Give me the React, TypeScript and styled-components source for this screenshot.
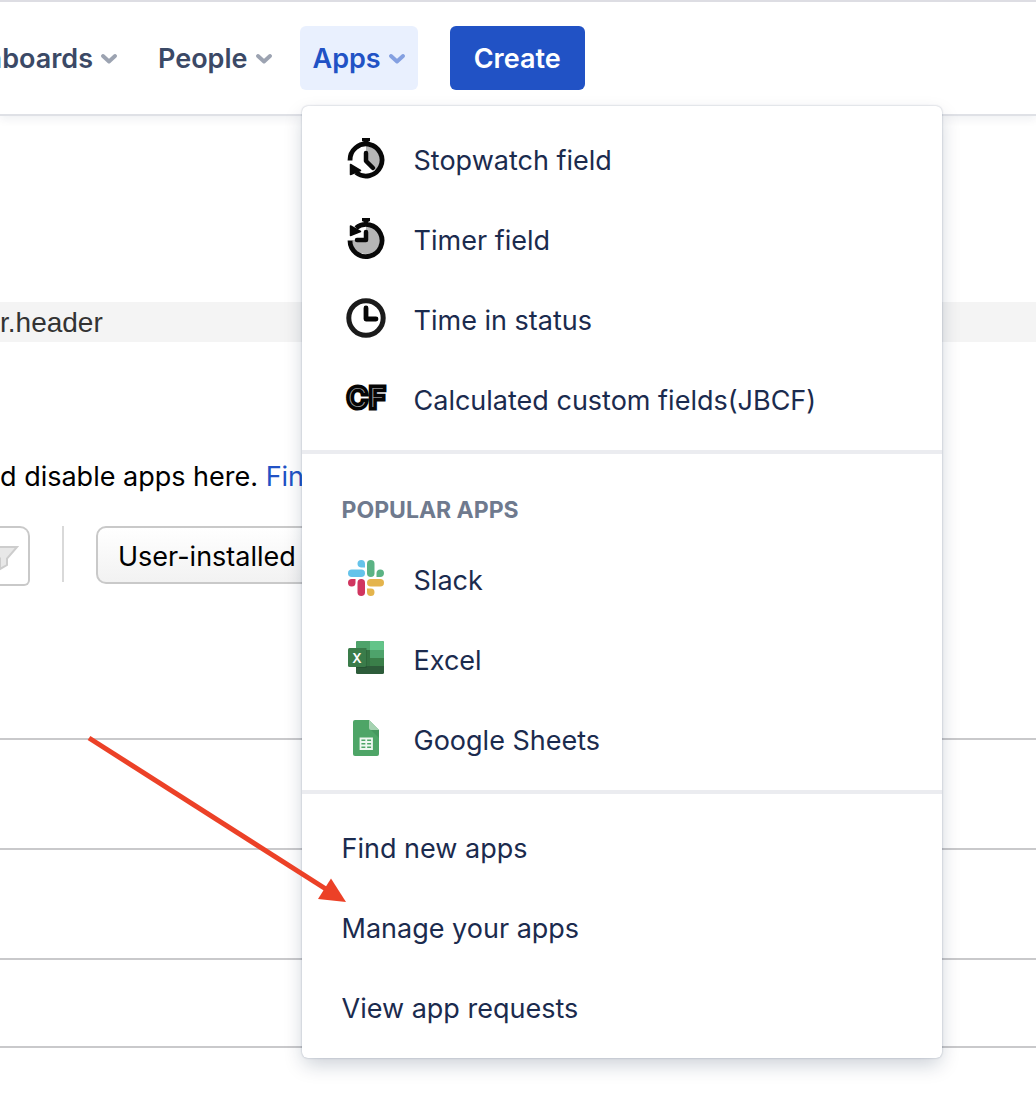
import React from "react";
import styled, { createGlobalStyle } from "styled-components";

const sans = `Inter, "Liberation Sans", Arial, sans-serif`;

const GlobalStyle = createGlobalStyle`
  *, *::before, *::after { box-sizing: border-box; }
  body {
    margin: 0;
    background: #fff;
    color: #000;
    font-family: ${sans};
    font-size: 27px;
    line-height: 36px;
    overflow-x: hidden;
  }
  button, input, select { font: inherit; margin: 0; }
`;

const Page = styled.div`
  position: relative;
  min-height: 100vh;
  overflow: hidden;
`;

const Header = styled.header`
  display: flex;
  align-items: center;
  gap: 32px;
  padding: 24px 0;
  border-top: 2px solid #dddde3;
  border-bottom: 2px solid #dfe1e6;
  box-shadow: 0 4px 8px rgba(9, 30, 66, 0.06);
`;

const Nav = styled.nav`
  display: flex;
  gap: 15px;
`;

const MenuAnchor = styled.div`
  position: relative;
`;

const NavButton = styled.button<{ $active?: boolean; $clipped?: boolean }>`
  display: flex;
  align-items: center;
  justify-content: flex-end;
  gap: 8px;
  width: ${(p) => (p.$clipped ? "130px" : "auto")};
  height: 64px;
  padding: 2px 13px 0;
  padding-left: ${(p) => (p.$clipped ? "0" : "13px")};
  overflow: hidden;
  border: 0;
  border-radius: 6px;
  background: ${(p) => (p.$active ? "#e9f0fe" : "transparent")};
  color: ${(p) => (p.$active ? "#2152c5" : "#3b4966")};
  font-weight: 600;
  cursor: pointer;

  svg {
    flex: none;
    opacity: 0.5;
  }
`;

const CreateButton = styled.button`
  height: 64px;
  padding: 2px 24px 0;
  border: 0;
  border-radius: 6px;
  background: #2152c5;
  color: #fff;
  font-weight: 600;
  cursor: pointer;
`;

const Menu = styled.div`
  position: absolute;
  z-index: 2;
  top: calc(100% + 16px);
  left: 2px;
  width: 640px;
  border-radius: 6px;
  background: #fff;
  box-shadow: 0 8px 20px -2px rgba(9, 30, 66, 0.22), 0 0 2px rgba(9, 30, 66, 0.31);
`;

const Section = styled.section`
  padding: 14px 0 10px;

  & + & {
    border-top: 4px solid #ebecf0;
  }
`;

const SectionTitle = styled.h2`
  margin: 0;
  padding: 28px 40px 16px;
  color: #6f7a8e;
  font-size: 23px;
  line-height: 28px;
  font-weight: 700;
`;

const MenuItem = styled.a`
  display: flex;
  align-items: center;
  gap: 24px;
  height: 80px;
  padding: 2px 40px 0;
  color: #1b2b4e;
  text-decoration: none;

  svg {
    flex: none;
    margin-bottom: 6px;
  }
`;

const Main = styled.main`
  padding-top: 186px;
`;

const Banner = styled.div`
  height: 40px;
  background: #f4f4f4;
  color: #333;
  font-family: "Liberation Sans", Arial, sans-serif;
  font-size: 28px;
  line-height: 42px;
`;

const Intro = styled.p`
  margin: 117px 0 31px;
  white-space: nowrap;

  a {
    color: #2152c5;
    text-decoration: none;
  }
`;

const Toolbar = styled.div`
  display: flex;
  align-items: flex-start;
`;

const FilterBox = styled.label`
  display: flex;
  align-items: center;
  width: 30px;
  height: 60px;
  padding-top: 4px;
  border: 2px solid #c9c9c9;
  border-left: 0;
  border-radius: 0 10px 6px 0;
  overflow: hidden;

  input {
    width: 0;
    padding: 0;
    border: 0;
    outline: 0;
  }
`;

const Separator = styled.span`
  width: 2px;
  height: 56px;
  margin: 0 32px;
  background: #d9d9d9;
`;

const ScopeSelect = styled.select`
  appearance: none;
  width: 240px;
  height: 58px;
  padding: 3px 20px 0;
  border: 2px solid #c9c9c9;
  border-radius: 10px;
  background: linear-gradient(#fff, #f2f2f2);
  color: #000;
`;

const AppList = styled.ul`
  margin: 152px 0 0;
  padding: 0;
  list-style: none;
  border-bottom: 2px solid #c9c9cb;
`;

const AppRow = styled.li<{ $short?: boolean }>`
  height: ${(p) => (p.$short ? "88px" : "110px")};
  border-top: 2px solid #c9c9cb;
`;

const Arrow = styled.svg`
  position: absolute;
  z-index: 3;
  top: 730px;
  left: 84px;
  pointer-events: none;
`;

const Chevron = () => (
  <svg width="16" height="12" viewBox="0 0 16 12" aria-hidden="true">
    <path d="M2 3 L8 8.500 L14 3" fill="none" stroke="currentColor" strokeWidth="3.800" strokeLinecap="round" strokeLinejoin="round" />
  </svg>
);

const StopwatchIcon = () => (
  <svg width="48" height="48" viewBox="0 0 48 48" aria-hidden="true">
    <path d="M24 12 A14 14 0 0 1 34 36 L24 26Z" fill="#b5b5b5" />
    <path d="M8 26.500 A16 16 0 1 1 14 38.500" fill="none" stroke="#080808" strokeWidth="4.800" />
    <path d="M20 4h8v3l-2 1v3h-4V8l-2-1z" fill="#080808" />
    <path d="M24 19v8l7 7" fill="none" stroke="#080808" strokeWidth="4.500" strokeLinecap="round" strokeLinejoin="round" />
    <path d="M8.500 30.500 L18.500 36.500 L8.500 40.500Z" fill="#080808" stroke="#080808" strokeWidth="1.500" strokeLinejoin="round" />
  </svg>
);

const TimerIcon = () => (
  <svg width="48" height="48" viewBox="0 0 48 48" aria-hidden="true">
    <path d="M24 12 V26 H10 A14 14 0 1 0 24 12Z" fill="#b5b5b5" />
    <path d="M8 26.500 A16 16 0 1 0 14 14" fill="none" stroke="#080808" strokeWidth="4.800" />
    <path d="M20 4h8v3l-2 1v3h-4V8l-2-1z" fill="#080808" />
    <path d="M24 18v8h-9" fill="none" stroke="#080808" strokeWidth="4.500" strokeLinecap="round" strokeLinejoin="round" />
    <path d="M8.500 12 L18.500 17.500 L8.500 21.500Z" fill="#080808" stroke="#080808" strokeWidth="1.500" strokeLinejoin="round" />
  </svg>
);

const ClockIcon = () => (
  <svg width="48" height="48" viewBox="0 0 48 48" aria-hidden="true">
    <circle cx="24" cy="24" r="17.200" fill="none" stroke="#1b1b1b" strokeWidth="5" />
    <path d="M24 14v11h10" fill="none" stroke="#050505" strokeWidth="4.800" strokeLinecap="round" strokeLinejoin="round" />
  </svg>
);

const CalculatedIcon = () => (
  <svg width="48" height="48" viewBox="0 0 48 48" aria-hidden="true">
    <g fontFamily="Inter, sans-serif" fontSize="28">
      <g fontWeight="500" fill="#050505" stroke="#050505" strokeWidth="5">
        <text x="5" y="34">C</text>
        <text x="27" y="34">F</text>
      </g>
      <g fontWeight="500" fill="#a0a0a0" stroke="#050505" strokeWidth="2">
        <text x="5" y="34">C</text>
        <text x="27" y="34">F</text>
      </g>
    </g>
  </svg>
);

const SlackIcon = () => (
  <svg width="48" height="48" viewBox="0 0 48 48" aria-hidden="true">
    <g fill="#65c3ea">
      <rect x="6" y="15.500" width="17" height="7.500" rx="3.750" />
      <path d="M23 13.500h-4a3.750 3.750 0 1 1 4-3.750z" />
    </g>
    <g fill="#5bb384">
      <rect x="25" y="6" width="7.500" height="17" rx="3.750" />
      <path d="M34.500 23v-4a3.750 3.750 0 1 1 3.750 4z" />
    </g>
    <g fill="#e4b44c">
      <rect x="25" y="25" width="17" height="7.500" rx="3.750" />
      <path d="M25 34.500h4a3.750 3.750 0 1 1-4 3.750z" />
    </g>
    <g fill="#d0355f">
      <rect x="15.500" y="25" width="7.500" height="17" rx="3.750" />
      <path d="M13.500 25v4a3.750 3.750 0 1 1-3.750-4z" />
    </g>
  </svg>
);

const ExcelIcon = () => (
  <svg width="48" height="48" viewBox="0 0 48 48" aria-hidden="true">
    <rect x="14" y="7" width="28" height="33" rx="1.500" fill="#2d5c3a" />
    <path d="M15.500 7H28v9H14V8.500Q14 7 15.500 7z" fill="#4ea36b" />
    <path d="M28 7h12.500Q42 7 42 8.500V16H28z" fill="#63c489" />
    <rect x="14" y="16" width="14" height="16" fill="#357544" />
    <rect x="28" y="16" width="14" height="8" fill="#4ea36b" />
    <rect x="28" y="24" width="14" height="8" fill="#3a7f49" />
    <path d="M14 14h10.500v20H14z" fill="#1d4a2a" opacity="0.450" />
    <rect x="6" y="14" width="18" height="19" rx="1.500" fill="#3a7c4a" />
    <text x="15" y="28.500" textAnchor="middle" fill="#fff" fontFamily="Inter, sans-serif" fontWeight="600" fontSize="13">X</text>
  </svg>
);

const SheetsIcon = () => (
  <svg width="48" height="48" viewBox="0 0 48 48" aria-hidden="true">
    <path d="M13 6h14l10 10v24q0 2-2 2H13q-2 0-2-2V8q0-2 2-2z" fill="#4ea567" />
    <path d="M27 6l10 10H29q-2 0-2-2z" fill="#a5d2b1" />
    <path d="M29 16h8v8z" fill="#3f8f58" opacity="0.600" />
    <path d="M18.500 24.500h11.500v10.500H18.500zM18.500 28h11.500M18.500 31.500h11.500M24.250 24.500v10.500" fill="none" stroke="#eef7f0" strokeWidth="1.800" />
  </svg>
);

const FunnelIcon = () => (
  <svg width="19" height="28" viewBox="0 0 19 28" aria-hidden="true">
    <path d="M-12 3H17L7 14.500V21L0 25V14.500Z" fill="#e8e8e8" stroke="#cdcdcd" strokeWidth="2" />
  </svg>
);

const installedApps = [
  { label: "Stopwatch field", Icon: StopwatchIcon },
  { label: "Timer field", Icon: TimerIcon },
  { label: "Time in status", Icon: ClockIcon },
  { label: "Calculated custom fields(JBCF)", Icon: CalculatedIcon },
];

const popularApps = [
  { label: "Slack", Icon: SlackIcon },
  { label: "Excel", Icon: ExcelIcon },
  { label: "Google Sheets", Icon: SheetsIcon },
];

const actions = ["Find new apps", "Manage your apps", "View app requests"];

export default function App() {
  return (
    <Page>
      <GlobalStyle />
      <Header>
        <Nav>
          <NavButton type="button" $clipped>
            hboards
            <Chevron />
          </NavButton>
          <NavButton type="button">
            People
            <Chevron />
          </NavButton>
          <MenuAnchor>
            <NavButton type="button" $active aria-expanded="true">
              Apps
              <Chevron />
            </NavButton>
            <Menu>
              <Section>
                {installedApps.map(({ label, Icon }) => (
                  <MenuItem href="#" key={label}>
                    <Icon />
                    {label}
                  </MenuItem>
                ))}
              </Section>
              <Section>
                <SectionTitle>POPULAR APPS</SectionTitle>
                {popularApps.map(({ label, Icon }) => (
                  <MenuItem href="#" key={label}>
                    <Icon />
                    {label}
                  </MenuItem>
                ))}
              </Section>
              <Section>
                {actions.map((label) => (
                  <MenuItem href="#" key={label}>
                    {label}
                  </MenuItem>
                ))}
              </Section>
            </Menu>
          </MenuAnchor>
        </Nav>
        <CreateButton type="button">Create</CreateButton>
      </Header>
      <Main>
        <Banner>r.header</Banner>
        <Intro>
          d disable apps here. <a href="#">Fin</a>
        </Intro>
        <Toolbar>
          <FilterBox>
            <input type="text" aria-label="Filter" />
            <FunnelIcon />
          </FilterBox>
          <Separator />
          <ScopeSelect aria-label="Scope" defaultValue="user">
            <option value="user">User-installed</option>
          </ScopeSelect>
        </Toolbar>
        <AppList>
          <AppRow />
          <AppRow />
          <AppRow $short />
        </AppList>
      </Main>
      <Arrow width="270" height="180" viewBox="0 0 270 180" aria-hidden="true">
        <path d="M5 8 L245 161" stroke="#ec4127" strokeWidth="5" />
        <path d="M262 172 L247 148.500 L234 169Z" fill="#ec4127" />
      </Arrow>
    </Page>
  );
}
